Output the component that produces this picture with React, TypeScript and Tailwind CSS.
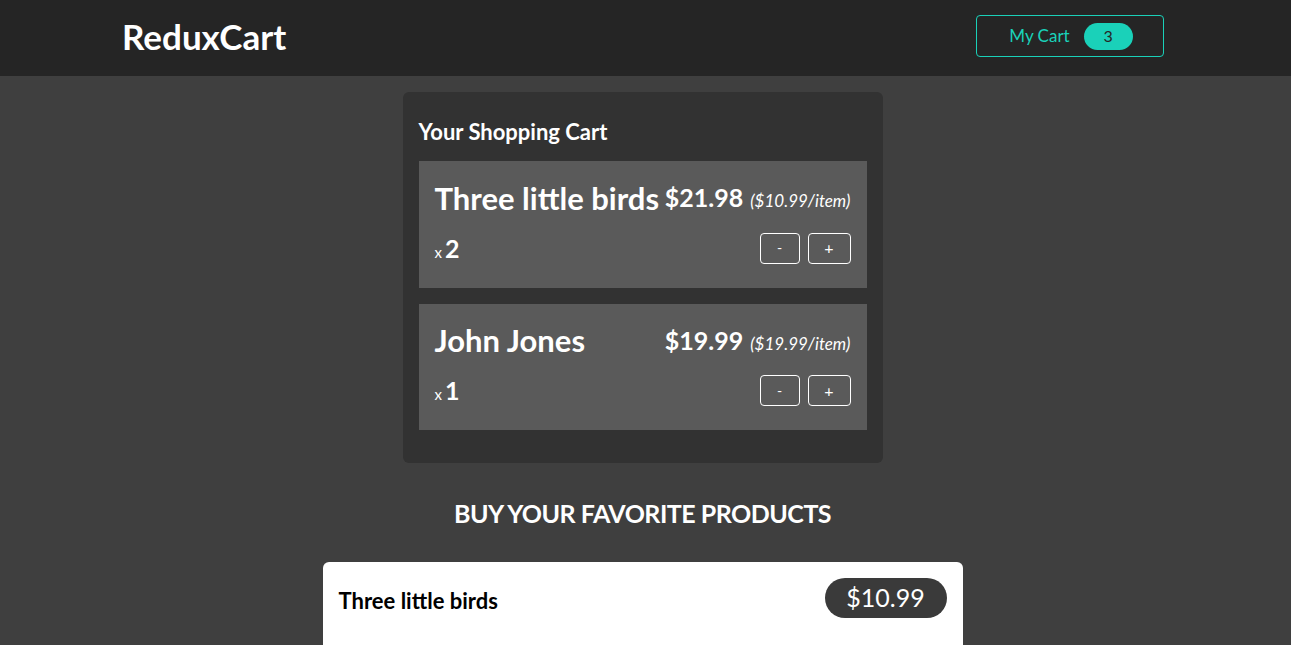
import { useState } from 'react';

const font = { fontFamily: 'Lato, "Noto Sans", sans-serif' };

type CartItem = { id: string; title: string; price: number; quantity: number };

const initialCart: CartItem[] = [
  { id: 'p1', title: 'Three little birds', price: 10.99, quantity: 2 },
  { id: 'p2', title: 'John Jones', price: 19.99, quantity: 1 },
];

const products = [{ id: 'p1', title: 'Three little birds', price: 10.99 }];

function CartRow({ item, onAdd, onRemove }: { item: CartItem; onAdd: () => void; onRemove: () => void }) {
  return (
    <li className="bg-[#5a5a5a] px-4 pt-[18px] pb-[24px] text-white">
      <header className="flex items-center justify-between">
        <h3 className="text-[31px] font-bold leading-[36px]">{item.title}</h3>
        <div className="flex items-baseline gap-[7px] whitespace-nowrap">
          <span className="text-[25px] font-bold">${(item.price * item.quantity).toFixed(2)}</span>
          <span className="text-[17px] italic">(${item.price.toFixed(2)}/item)</span>
        </div>
      </header>
      <div className="mt-[16px] flex items-center justify-between">
        <div className="flex items-baseline gap-[3px] pt-[3px]">
          <span className="text-[15px]">x</span>
          <span className="text-[25px] font-bold leading-none">{item.quantity}</span>
        </div>
        <div className="flex gap-2">
          <button
            onClick={onRemove}
            className="h-[31px] w-[40px] rounded-[4px] border border-white text-[14px] leading-none text-white"
          >
            -
          </button>
          <button
            onClick={onAdd}
            className="h-[31px] w-[43px] rounded-[4px] border border-white text-[16px] leading-none text-white"
          >
            +
          </button>
        </div>
      </div>
    </li>
  );
}

export default function App() {
  const [cart, setCart] = useState(initialCart);
  const totalQty = cart.reduce((s, i) => s + i.quantity, 0);

  const change = (id: string, delta: number) =>
    setCart((c) =>
      c
        .map((i) => (i.id === id ? { ...i, quantity: i.quantity + delta } : i))
        .filter((i) => i.quantity > 0)
    );

  return (
    <div className="min-h-screen bg-[#3f3f3f]" style={font}>
      {/* Header */}
      <header className="flex h-[76px] items-center justify-between bg-[#252525] pb-[4px] pl-[122px] pr-[127px]">
        <h1 className="text-[35px] font-bold text-white">ReduxCart</h1>
        <button className="flex h-[42px] w-[188px] items-center justify-center gap-[14px] rounded-[4px] border border-[#1ad1b9] pl-[2px] text-[#1ad1b9]">
          <span className="text-[17px]">My Cart</span>
          <span className="flex h-[27px] w-[49px] items-center justify-center rounded-full bg-[#1ad1b9] text-[16px] text-[#252525]">
            {totalQty}
          </span>
        </button>
      </header>

      <main className="flex flex-col items-center pr-[6px]">
        {/* Cart */}
        <section className="mt-4 w-[480px] rounded-[6px] bg-[#323232] px-4 pt-[23px] pb-[33px]">
          <h2 className="mb-[13px] text-[22px] font-bold text-white">Your Shopping Cart</h2>
          <ul className="flex flex-col gap-4">
            {cart.map((item) => (
              <CartRow key={item.id} item={item} onAdd={() => change(item.id, 1)} onRemove={() => change(item.id, -1)} />
            ))}
          </ul>
        </section>

        {/* Products */}
        <section className="mt-[32px] flex flex-col items-center">
          <h2 className="text-[25px] font-bold uppercase tracking-[-0.5px] text-white">Buy your favorite products</h2>
          <ul className="mt-[29px] w-[640px]">
            {products.map((p) => (
              <li key={p.id} className="rounded-[6px] bg-white p-4 pb-10">
                <header className="flex items-center justify-between">
                  <h3 className="pt-[5px] text-[22px] font-bold text-black">{p.title}</h3>
                  <span className="flex h-[40px] w-[122px] items-center justify-center rounded-full bg-[#3a3a3a] text-[25px] text-white">
                    ${p.price.toFixed(2)}
                  </span>
                </header>
              </li>
            ))}
          </ul>
        </section>
      </main>
    </div>
  );
}
